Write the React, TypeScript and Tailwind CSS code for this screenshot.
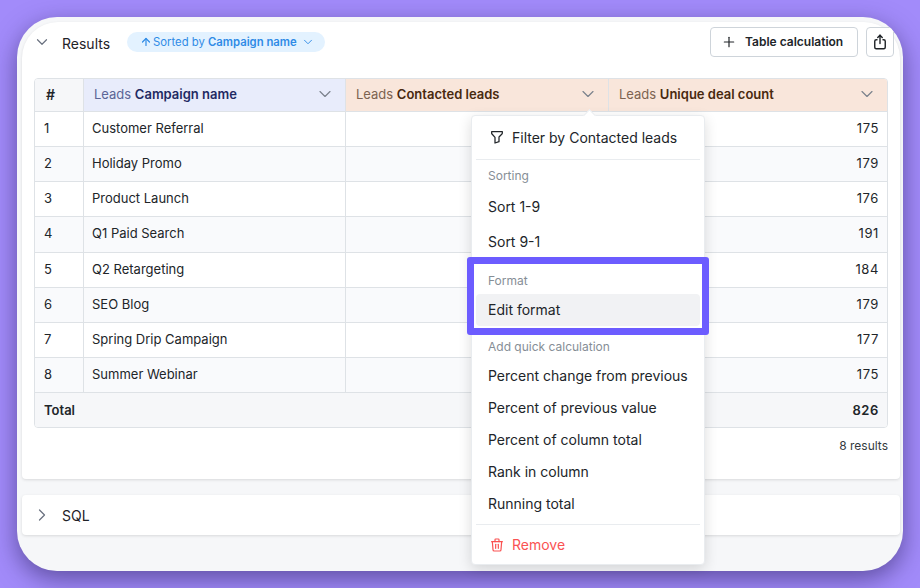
import { ChevronDown, ChevronRight, Plus, ArrowUp } from "lucide-react";

const rows: [string, string, number][] = [
  ["1", "Customer Referral", 175],
  ["2", "Holiday Promo", 179],
  ["3", "Product Launch", 176],
  ["4", "Q1 Paid Search", 191],
  ["5", "Q2 Retargeting", 184],
  ["6", "SEO Blog", 179],
  ["7", "Spring Drip Campaign", 177],
  ["8", "Summer Webinar", 175],
];

function HeaderCell({ name, tone }: { name: string; tone: "blue" | "orange" }) {
  const blue = tone === "blue";
  return (
    <div className={`flex items-center justify-between pl-[10px] pr-[10px] pb-[1px] h-full border-l border-[#dee2e6] ${blue ? "bg-[#e8ecfb] text-[#1f2a63]" : "bg-[#f9e6db] text-[#48290f]"}`}>
      <span className="text-[13px]">
        <span className={blue ? "text-[#5c6596]" : "text-[#7d6350]"}>Leads </span>
        <span className="font-semibold">{name}</span>
      </span>
      <ChevronDown size={20} strokeWidth={1.4} className="-mt-[1px] text-[#7b828c]" />
    </div>
  );
}

function MenuItem({ label }: { label: string }) {
  return <div className="h-[32px] flex items-center whitespace-nowrap px-[16px] pb-[1px] text-[14px] text-[#212529]">{label}</div>;
}

export default function App() {
  return (
    <div className="relative w-[920px] h-[588px] overflow-hidden bg-[#a28bfa] p-[17px] font-['Inter',sans-serif]">
      <div className="h-[554px] w-[886px] rounded-[40px] bg-[#f6f7f9] shadow-[0_8px_24px_rgba(40,30,90,0.55)] overflow-hidden pl-[5px] pt-[5px] pr-[3px]">
        <div className="h-[457px] rounded-b-[4px] rounded-t-[36px] bg-white shadow-[0_1px_3px_rgba(0,0,0,0.12)] px-3">
          <div className="flex h-[56px] items-start justify-between">
            <div className="flex items-center h-[40px]">
              <ChevronDown size={18} strokeWidth={1.6} className="-ml-[1px] text-[#6b7280]" />
              <span className="ml-[11px] pt-[2px] text-[14px] text-[#1f2328]">Results</span>
              <span className="ml-[17px] flex h-[20px] items-center rounded-full bg-[#e3f2ff] pl-[13px] pr-[10px] text-[11.3px] text-[#2f8be6]">
                <ArrowUp size={12} strokeWidth={2.4} className="mr-[1px]" />
                Sorted by&nbsp;<span className="font-semibold">Campaign name</span>
                <ChevronDown size={14} strokeWidth={1.6} className="ml-[4px]" />
              </span>
            </div>
            <div className="-mr-[6px] flex items-start gap-[8px] pt-[5px]">
              <button className="flex h-[30px] w-[148px] items-center justify-start gap-[8px] rounded-[4px] border border-[#ced4da] bg-white pl-[10px] text-[12px] font-semibold text-[#212529]">
                <Plus size={16} strokeWidth={1.8} />
                Table calculation
              </button>
              <button className="flex h-[30px] w-[28px] items-center justify-center rounded-[4px] border border-[#ced4da] bg-white text-[#212529]">
                <svg width="18" height="18" viewBox="0 0 24 24" fill="none" stroke="currentColor" strokeWidth="1.9" strokeLinecap="round" strokeLinejoin="round">
                  <path d="M8 9h-1a2 2 0 0 0 -2 2v8a2 2 0 0 0 2 2h10a2 2 0 0 0 2 -2v-8a2 2 0 0 0 -2 -2h-1" />
                  <path d="M12 14v-11" />
                  <path d="M9 6l3 -3l3 3" />
                </svg>
              </button>
            </div>
          </div>

          <div className="mr-0 w-[854px] overflow-hidden rounded-[4px] border border-[#dee2e6] text-[13px] text-[#212529]">
            <div className="grid h-[32px] grid-cols-[48px_262px_263px_279px]">
              <div className="flex items-center pl-[11px] pb-[1px] bg-[#f6f7f9] text-[14px] font-semibold">#</div>
              <HeaderCell name="Campaign name" tone="blue" />
              <HeaderCell name="Contacted leads" tone="orange" />
              <HeaderCell name="Unique deal count" tone="orange" />
            </div>
            {rows.map(([n, name, v], i) => (
              <div key={n} className={`grid h-[35.15px] grid-cols-[48px_262px_263px_279px] border-t border-[#dee2e6] ${i % 2 ? "bg-[#f9fafc]" : "bg-white"}`}>
                <div className="flex items-center pb-[0.5px] pl-[9px]">{n}</div>
                <div className="flex items-center pb-[0.5px] border-l border-[#dee2e6] pl-[8px]">{name}</div>
                <div className="border-l border-[#dee2e6]"></div>
                <div className="flex items-center pb-[0.5px] justify-end pr-[8px] tracking-[0.6px]">{v}</div>
              </div>
            ))}
            <div className="flex h-[35px] items-center justify-between border-t border-[#dee2e6] bg-[#f6f7f9] pl-[9px] pr-[8px] pt-[1px] font-semibold">
              <span>Total</span>
              <span className="tracking-[0.6px]">826</span>
            </div>
          </div>
          <div className="mt-[9px] w-[854px] text-right text-[12px] text-[#343a40]">8 results</div>
        </div>

        <div className="mt-[16px] flex h-[40px] items-center rounded-[4px] bg-white shadow-[0_1px_3px_rgba(0,0,0,0.12)] px-3">
          <ChevronRight size={20} strokeWidth={1.5} className="-ml-[2px] -mt-[1px] text-[#6b7280]" />
          <span className="ml-[10px] text-[14px] text-[#1f2328]">SQL</span>
        </div>
      </div>

      <div className="absolute left-[471px] top-[115px] h-[450px] w-[234px] rounded-[4px] border border-[#e9ecef] bg-white shadow-[0_4px_14px_rgba(0,0,0,0.14)]">
        <div className="absolute -top-[5px] left-[113px] h-[9px] w-[9px] rotate-45 border-l border-t border-[#e9ecef] bg-white"></div>
        <div className="flex h-[43px] items-center px-[16px] pb-[2px] pt-[1px] text-[14px] text-[#212529]">
          <svg width="16" height="16" viewBox="0 0 24 24" fill="none" stroke="currentColor" strokeWidth="1.9" strokeLinecap="round" strokeLinejoin="round" className="mr-[8px] translate-x-[1px]">
            <path d="M4 4h16v2.172a2 2 0 0 1 -.586 1.414l-4.414 4.414v7l-6 2v-8.5l-4.48 -4.928a2 2 0 0 1 -.52 -1.345v-2.227z" />
          </svg>
          Filter by Contacted leads
        </div>
        <div className="mx-[4px] border-t border-[#e9ecef]"></div>
        <div className="flex h-[29px] items-center px-[16px] pt-[2px] text-[12px] text-[#868e96]">Sorting</div>
        <div className="flex h-[35px] items-center px-[16px] text-[14px] text-[#212529]">Sort 1-9</div>
        <div className="flex h-[35px] items-center px-[16px] text-[14px] text-[#212529]">Sort 9-1</div>
        <div className="flex h-[35px] items-end px-[16px] pb-[4px] text-[12px] text-[#868e96]">Format</div>
        <div className="mx-[4px] flex h-[32px] items-center rounded-[4px] bg-[#f1f2f4] px-[12px] pb-[1px] text-[14px] text-[#212529]">Edit format</div>
        <div className="flex h-[34px] items-end px-[16px] pb-[4px] text-[12px] text-[#868e96]">Add quick calculation</div>
        <div>
          <MenuItem label="Percent change from previous" />
          <MenuItem label="Percent of previous value" />
          <MenuItem label="Percent of column total" />
          <MenuItem label="Rank in column" />
          <MenuItem label="Running total" />
        </div>
        <div className="mx-[4px] mt-[4px] border-t border-[#e9ecef]"></div>
        <div className="flex h-[40px] items-center px-[16px] pb-[1px] text-[14px] text-[#fa5252]">
          <svg width="16" height="16" viewBox="0 0 24 24" fill="none" stroke="currentColor" strokeWidth="1.8" strokeLinecap="round" strokeLinejoin="round" className="mr-[8px] translate-x-[1px]">
            <path d="M4 7h16" />
            <path d="M10 11v6" />
            <path d="M14 11v6" />
            <path d="M5 7l1 12a2 2 0 0 0 2 2h8a2 2 0 0 0 2 -2l1 -12" />
            <path d="M9 7v-3a1 1 0 0 1 1 -1h4a1 1 0 0 1 1 1v3" />
          </svg>
          Remove
        </div>
      </div>

      <div className="absolute left-[467px] top-[257px] h-[78px] w-[242px] rounded-[3px] border-[7px] border-[#6c5cff]"></div>
    </div>
  );
}
